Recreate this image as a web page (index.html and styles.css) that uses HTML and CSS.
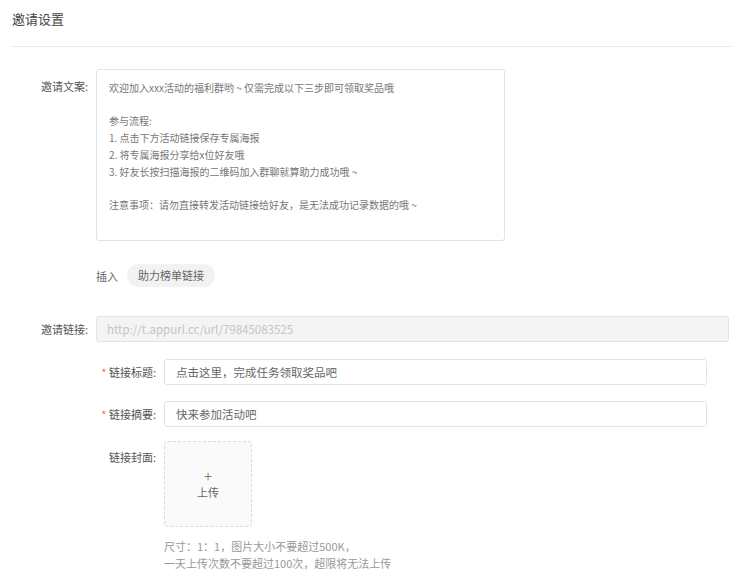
FILE: index.html
```html
<!DOCTYPE html>
<html lang="zh">
<head>
<meta charset="utf-8">
<link rel="stylesheet" href="styles.css">
</head>
<body>
<div class="page">
  <div class="header"><span class="title">邀请设置</span></div>
  <div class="form">
    <div class="row row-text">
      <div class="label label-top">邀请文案:</div>
      <div class="textarea">
        <p>欢迎加入xxx活动的福利群哟 ~ 仅需完成以下三步即可领取奖品哦</p>
        <p>&nbsp;</p>
        <p>参与流程:</p>
        <p>1. 点击下方活动链接保存专属海报</p>
        <p>2. 将专属海报分享给x位好友哦</p>
        <p>3. 好友长按扫描海报的二维码加入群聊就算助力成功哦 ~</p>
        <p>&nbsp;</p>
        <p>注意事项：请勿直接转发活动链接给好友，是无法成功记录数据的哦 ~</p>
      </div>
    </div>
    <div class="insert-row">
      <span class="insert-label">插入</span>
      <span class="chip">助力榜单链接</span>
    </div>
    <div class="row row-link">
      <div class="label">邀请链接:</div>
      <div class="input input-disabled">http://t.appurl.cc/url/79845083525</div>
    </div>
    <div class="sub">
      <div class="row row-sub">
        <div class="label label-sub"><span class="star">*</span> 链接标题:</div>
        <div class="input">点击这里，完成任务领取奖品吧</div>
      </div>
      <div class="row row-sub">
        <div class="label label-sub"><span class="star">*</span> 链接摘要:</div>
        <div class="input">快来参加活动吧</div>
      </div>
      <div class="row row-cover">
        <div class="label label-sub label-top">链接封面:</div>
        <div class="cover-col">
          <div class="upload">
            <span class="plus">+</span>
            <span class="upload-text">上传</span>
          </div>
          <div class="hint">
            <p>尺寸：1：1，图片大小不要超过500K，</p>
            <p>一天上传次数不要超过100次，超限将无法上传</p>
          </div>
        </div>
      </div>
    </div>
  </div>
</div>
</body>
</html>
```

FILE: styles.css
```css
* { box-sizing: border-box; }
html, body { margin: 0; padding: 0; background: #fff; }
body {
  font-family: "Noto Sans CJK SC", "Noto Sans", sans-serif;
  color: #555;
  width: 733px;
  height: 575px;
  overflow: hidden;
}
p { margin: 0; }
.header {
  margin-left: 10px;
  height: 47px;
  border-bottom: 1px solid #ececec;
  display: flex;
  align-items: center;
  padding-bottom: 9px;
}
.title {
  font-size: 13px;
  color: #444;
  margin-left: 2px;
}
.form {
  padding-top: 22px;
}
.row {
  display: flex;
  align-items: center;
}
.label {
  flex: none;
  width: 92px;
  padding-right: 4px;
  text-align: right;
  font-size: 11px;
  color: #555;
  white-space: nowrap;
}
.label-top { align-self: flex-start; }
.row-text .label { padding-top: 9px; line-height: 17px; }
.textarea {
  width: 409px;
  height: 172px;
  margin-left: 4px;
  border: 1px solid #e2e2e2;
  border-radius: 3px;
  padding: 10px 12px;
  font-size: 10px;
  line-height: 16.7px;
  color: #777;
}
.insert-row {
  margin-top: 23px;
  margin-left: 96px;
  display: flex;
  align-items: center;
  height: 23px;
  font-size: 11px;
  color: #666;
}
.insert-label { margin-right: 9px; }
.chip {
  height: 23px;
  line-height: 23px;
  padding: 0 11px;
  border-radius: 12px;
  background: #f2f2f2;
  color: #666;
}
.row-link { margin-top: 29px; padding-right: 4px; }
.input {
  flex: 1;
  height: 26px;
  margin-left: 4px;
  border: 1px solid #e2e2e2;
  border-radius: 3px;
  padding: 0 11px;
  display: flex;
  align-items: center;
  font-size: 11.5px;
  color: #666;
}
.input-disabled {
  background: #f4f4f4;
  color: #c4c4c4;
  padding-left: 10px;
}
.sub {
  margin-left: 0;
  padding-right: 26px;
}
.label-sub { width: 160px; }
.star { color: #f56c6c; }
.row-sub { margin-top: 17px; }
.row-sub + .row-sub { margin-top: 16px; }
.row-cover { margin-top: 14px; align-items: flex-start; }
.row-cover .label { padding-top: 8px; line-height: 17px; }
.cover-col { margin-left: 4px; }
.upload {
  width: 88px;
  height: 86px;
  border: 1px dashed #dcdcdc;
  border-radius: 4px;
  background: #fafafa;
  display: flex;
  flex-direction: column;
  align-items: center;
  justify-content: center;
  color: #666;
}
.plus { font-size: 15px; line-height: 16px; font-weight: 300; }
.upload-text { font-size: 11px; line-height: 16px; }
.hint {
  margin-top: 11px;
  font-size: 11px;
  line-height: 17px;
  color: #999;
}
```
